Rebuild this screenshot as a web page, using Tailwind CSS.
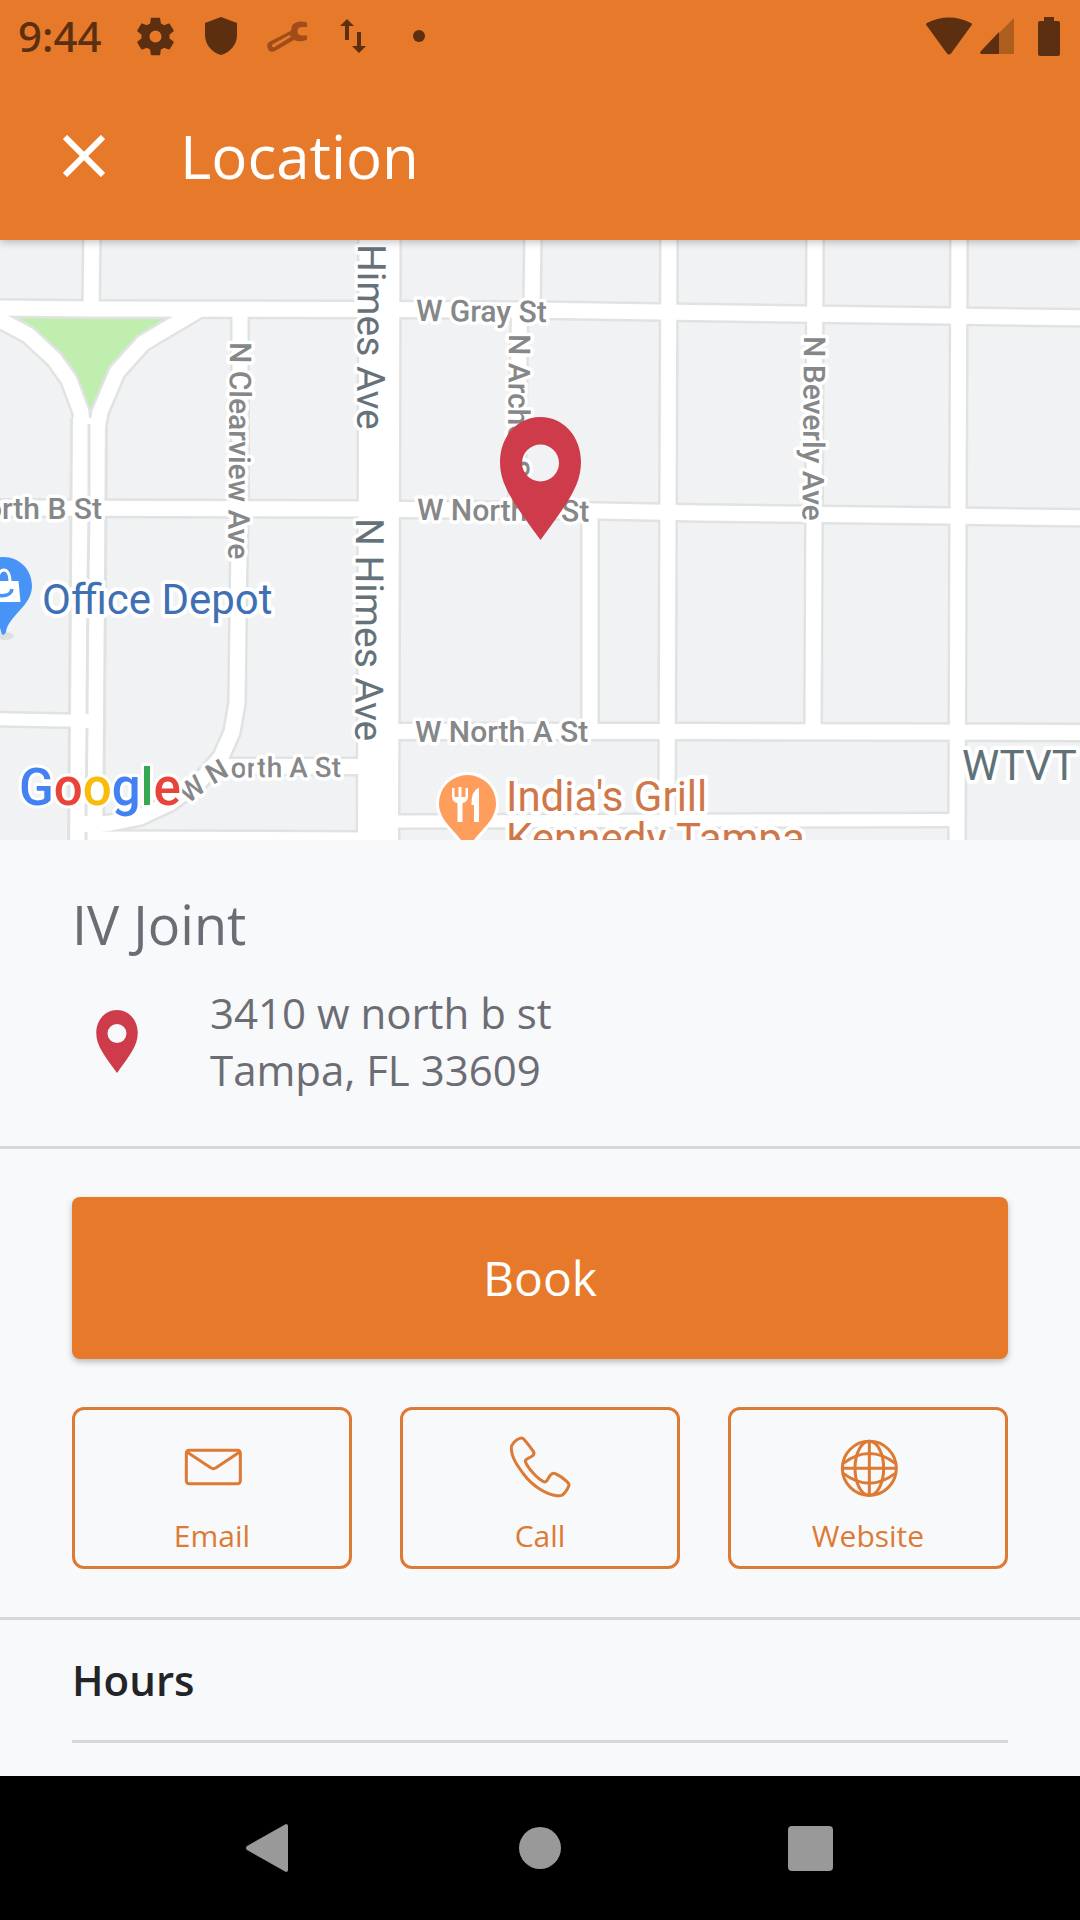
<!DOCTYPE html>
<html lang="en">
<head>
  <meta charset="UTF-8">
  <meta name="viewport" content="width=device-width, initial-scale=1.0">
  <title>Location</title>
  <script src="https://cdn.jsdelivr.net/npm/@tailwindcss/browser@4"></script>
</head>
<body class="bg-[#f8f9fb] font-['Open_Sans',sans-serif]">
  <!-- Shared pin shape -->
  <svg class="hidden" aria-hidden="true">
    <symbol id="pin" viewBox="0 0 81 123">
      <path fill="#ce3c4b" fill-rule="evenodd" d="M40.5 0C17 0 0 20 0 45C0 70 16 89 40.5 123C65 89 81 70 81 45C81 20 64 0 40.5 0ZM40.5 27.5A18.5 18.5 0 1 1 40.5 64.5A18.5 18.5 0 1 1 40.5 27.5Z"/>
    </symbol>
  </svg>

  <div class="flex min-h-screen flex-col">
    <!-- Header -->
    <header class="relative z-10 bg-[#e67a2a] shadow-[0_2px_8px_rgba(0,0,0,0.25)]">
      <div class="flex h-[72px] items-center justify-between pl-[18px] pr-5 text-[#5c2f10]">
        <div class="flex items-center">
          <span class="w-26 font-['Noto_Sans',sans-serif] text-[42px] leading-[60px] font-medium">9:44</span>
          <span class="flex w-[66px] justify-center">
            <svg class="size-[45px]" viewBox="0 0 24 24" fill="currentColor"><path d="M19.43 12.98c.04-.32.07-.64.07-.98s-.03-.66-.07-.98l2.11-1.65c.19-.15.24-.42.12-.64l-2-3.46c-.12-.22-.39-.3-.61-.22l-2.49 1c-.52-.4-1.08-.73-1.69-.98l-.38-2.65A.488.488 0 0 0 14 2h-4c-.25 0-.46.18-.49.42l-.38 2.65c-.61.25-1.17.59-1.69.98l-2.49-1c-.23-.09-.49 0-.61.22l-2 3.46c-.13.22-.07.49.12.64l2.11 1.65c-.04.32-.07.65-.07.98s.03.66.07.98l-2.11 1.65c-.19.15-.24.42-.12.64l2 3.46c.12.22.39.3.61.22l2.49-1c.52.4 1.08.73 1.69.98l.38 2.65c.03.24.24.42.49.42h4c.25 0 .46-.18.49-.42l.38-2.65c.61-.25 1.17-.59 1.69-.98l2.49 1c.23.09.49 0 .61-.22l2-3.46c.12-.22.07-.49-.12-.64l-2.11-1.65zM12 15.2a3.200 3.200 0 1 1 0-6.400a3.200 3.200 0 0 1 0 6.400z"/></svg>
          </span>
          <span class="flex w-[66px] justify-center">
            <svg class="h-[38px] w-8" viewBox="0 0 32 38" fill="currentColor"><path d="M16 0L32 6V18C32 27 26 35 16 38C6 35 0 27 0 18V6Z"/></svg>
          </span>
          <span class="flex w-[66px] justify-center">
            <svg class="h-[31px] w-10" viewBox="0 0 40 31" fill="#a04d1a"><path fill-rule="evenodd" d="M39 1C33 -.5 27 1 25 5C24 7 25 9 23.500 10L3 20.500C0 22 -.5 25 1 28C2.500 31 5 31.500 8 30L27 19C31 21 37 20.500 40 18.500V14.500H35C32 14.500 30.500 12.500 30.500 10.500C30.500 7.500 32 6 35 6H40V2ZM23 16.500L7.500 26C5 27 4 24.500 6 23L21.500 14.500C23.500 13.800 24.500 15.500 23 16.500Z"/></svg>
          </span>
          <span class="flex w-[66px] justify-center">
            <svg class="h-[34px] w-[26px]" viewBox="0 0 26 34" fill="currentColor"><path d="M7 0L14 7H9V21H5V7H0ZM19 34L12 27H17V13H21V27H26Z"/></svg>
          </span>
          <span class="flex w-[66px] justify-center">
            <span class="size-3 rounded-full bg-current"></span>
          </span>
        </div>
        <div class="flex items-center">
          <svg class="h-[38px] w-[46px]" viewBox="0 0 46 38" fill="currentColor"><path d="M1 9C-.5 8 0 6.500 1 6C14-1.500 32-1.500 45 6C46 6.500 46.500 8 45 9L25 36.500Q23 38.500 21 36.500Z"/></svg>
          <svg class="ml-2 h-9 w-[34px]" viewBox="0 0 34 36" fill="currentColor"><path d="M34 0V36H19V15Z" opacity=".4"/><path d="M19 14V36H2C0 36-.5 34 1 33Z"/></svg>
          <svg class="ml-6 h-[39px] w-[22px]" viewBox="0 0 22 39" fill="currentColor"><path d="M6 0H16V4H20Q22 4 22 6V37Q22 39 20 39H2Q0 39 0 37V6Q0 4 2 4H6Z"/></svg>
        </div>
      </div>
      <div class="flex h-[168px] items-center pl-12 text-white">
        <button type="button" aria-label="Close" class="flex size-[72px] items-center justify-center">
          <svg class="size-[42px]" viewBox="0 0 42 42" fill="none" stroke="currentColor" stroke-width="6"><path d="M2 2L40 40M40 2L2 40"/></svg>
        </button>
        <h1 class="ml-15 text-[60px] leading-[78px]">Location</h1>
      </div>
    </header>

    <main class="flex-1">
      <!-- Map -->
      <svg class="block aspect-[9/5] w-full" viewBox="0 0 1080 600" role="img" aria-label="Map around 3410 w north b st">
        <defs>
          <g id="roads" fill="none">
            <path d="M92 -10L91 69"/>
            <path d="M-10 68L90 69L360 69.500L530 70L660 72L950 76L1090 78"/>
            <path d="M-10 268L360 269L400 269.500L600 271L700 273L950 276L1090 278"/>
            <path d="M380 491.500L700 491.500L1090 492.500"/>
            <path d="M-10 75L0 80L28 95L54 119L69 140L81 172L82 190"/>
            <path d="M202 68L143 103L117 132L100 172L97 190"/>
            <path d="M240 70L240 270L238.500 340L237 463L232 492L221 517L200 541L170 563L140 577L110 583L92 585"/>
            <path d="M222 526.500L380 526.500"/>
            <path d="M88 599L370 600"/>
            <path d="M533 -10L532 70"/>
            <path d="M519.500 70L517 270"/>
            <path d="M590 270L590 491"/>
            <path d="M669 -10L668 270L667 581"/>
            <path d="M815 -10L814 270L813 491"/>
            <path d="M959 -10L958 270L957 610"/>
          </g>
          <g id="lanes" fill="none">
            <path d="M-10 479L88 481"/>
            <path d="M390 581.500L957 580"/>
          </g>
          <path id="curve" d="M176 575L191 562L213 545L226 537.500L341 537"/>
        </defs>
        <rect width="1080" height="600" fill="#f1f2f4"/>
        <path d="M18 78H165L133 101L111 129L94 169H86L74 136L57 110L35 88Z" fill="#bfeeae"/>
        <g stroke="#e1e2e2">
          <use href="#roads" stroke-width="20"/>
          <use href="#lanes" stroke-width="17"/>
          <path d="M89 178L88 340L86 610" stroke-width="38"/>
          <path d="M379.500 -10L378 610" stroke-width="45"/>
        </g>
        <g stroke="#fff">
          <path d="M89 178L88 340L86 610" stroke-width="32"/>
          <path d="M379.500 -10L378 610" stroke-width="40"/>
          <use href="#roads" stroke-width="15"/>
          <use href="#lanes" stroke-width="12"/>
        </g>
        <path d="M89 184V262M89 276L88 340L87 474M87 488L86 576M86 592V600" stroke="#e1e2e2" stroke-width="3" fill="none"/>

        <!-- Office Depot marker -->
        <ellipse cx="5" cy="396" rx="9" ry="4" fill="#000" opacity=".08"/>
        <path d="M3 317C20 317 32 330 32 346C32 366 8 376 6 392Q3 398 1 392C-1 376 -26 366 -26 346C-26 330 -14 317 3 317Z" fill="#4794f6"/>
        <path d="M-14 341H18.500L20.500 362H-16Z" fill="#fff"/>
        <path d="M-3 342C-3 328 10 324 10 342" stroke="#fff" stroke-width="3" fill="none"/>
        <path d="M-8 349C-6 358 11 358 12 349" stroke="#4794f6" stroke-width="3.500" fill="none"/>

        <!-- Restaurant marker -->
        <path d="M467.500 535A28.500 28.500 0 0 1 496 563.500C496 579 483 588 474 600L467 606L461 600C452 588 439 579 439 563.500A28.500 28.500 0 0 1 467.500 535Z" fill="#ff9d5c" stroke="#fff" stroke-width="6" paint-order="stroke"/>
        <path d="M452 548V556Q452 562 457.500 563V582H462.500V563Q468 562 468 556V548H465.500V557H461.500V547H458.500V557H454.500V548ZM479 547.500Q471 551 471.500 565H474V582H479Z" fill="#fff"/>

        <!-- Street names -->
        <g class="font-['Roboto',sans-serif]" stroke="#fff" stroke-linejoin="round" paint-order="stroke">
          <g class="text-[30px] font-medium" fill="#858789" stroke-width="7">
            <text x="416" y="81" transform="rotate(0.500 416 81)">W Gray St</text>
            <text x="417" y="280" transform="rotate(0.500 417 280)">W North B St</text>
            <text x="415" y="502">W North A St</text>
            <text x="102" y="279" text-anchor="end">W North B St</text>
            <text class="text-[28px]"><textPath href="#curve" startOffset="100%" text-anchor="end">W North A St</textPath></text>
            <text transform="translate(230 102) rotate(90.500)">N Clearview Ave</text>
            <text transform="translate(804 96) rotate(90.500)">N Beverly Ave</text>
            <text transform="translate(509 94) rotate(90.500)">N Archer St</text>
          </g>
          <g class="text-[39px]" fill="#66727a" stroke-width="7">
            <text transform="translate(358 4) rotate(90.300)">Himes Ave</text>
            <text transform="translate(356 278) rotate(90.200)">N Himes Ave</text>
          </g>
          <g class="text-[42px]" stroke-width="8">
            <text x="42" y="374" fill="#4070b4">Office Depot</text>
            <text x="962" y="540" fill="#5f727a">WTVT</text>
            <text x="506" y="571" fill="#cf7749">India's Grill</text>
            <text x="506" y="613" fill="#cf7749">Kennedy Tampa</text>
          </g>
          <text x="19" y="565" class="text-[51px] font-medium" stroke-width="6"><tspan fill="#4482f4">G</tspan><tspan fill="#e8443a">o</tspan><tspan fill="#fabc0a">o</tspan><tspan fill="#4482f4">g</tspan><tspan fill="#36a852">l</tspan><tspan fill="#e8443a">e</tspan></text>
        </g>
        <use href="#pin" x="500" y="177" width="81" height="123"/>
      </svg>

      <!-- Address -->
      <section class="border-b-3 border-[#d6d7d9] px-[72px] py-12 text-[#6c6d74]">
        <h2 class="text-[54px] leading-[72px]">IV Joint</h2>
        <div class="mt-6 flex items-center">
          <svg class="ml-6 h-[63px] w-[42px]" aria-hidden="true"><use href="#pin"/></svg>
          <address class="ml-[72px] text-[42px] leading-[57px] not-italic">3410 w north b st<br>Tampa, FL 33609</address>
        </div>
      </section>

      <!-- Actions -->
      <section class="border-b-3 border-[#d6d7d9] px-[72px] py-12">
        <button type="button" class="block h-[162px] w-full rounded-lg bg-[#e67a2a] text-[48px] leading-[66px] text-white shadow-[0_3px_6px_rgba(0,0,0,0.25)]">Book</button>
        <div class="mt-12 grid grid-cols-3 gap-12 text-[30px] leading-[42px] text-[#dd7a33]">
          <a href="#email" class="flex h-[162px] flex-col items-center rounded-xl border-3 border-current pt-6">
            <svg class="size-[66px]" viewBox="0 0 198 198" fill="none" stroke="currentColor" stroke-width="9" stroke-linejoin="round"><rect x="22" y="49" width="162" height="100" rx="8"/><path d="M24 54L95 101Q103 107 111 101L182 54"/></svg>
            <span class="mt-[15px]">Email</span>
          </a>
          <a href="#call" class="flex h-[162px] flex-col items-center rounded-xl border-3 border-current pt-6">
            <svg class="size-[66px]" viewBox="0 0 198 198" fill="none" stroke="currentColor" stroke-width="9" stroke-linejoin="round"><path d="M13 42C13 30 28 16 38 13Q46 10 50 15Q66 33 79 52Q84 60 76 66L60 75Q53 79 56 85C64 104 92 134 108 142Q114 146 119 141L129 125Q135 116 143 118Q165 127 182 145Q188 151 185 157C181 166 174 177 166 183Q161 186 150 185C118 182 76 155 52 123C30 94 13 70 13 42Z"/></svg>
            <span class="mt-[15px]">Call</span>
          </a>
          <a href="#website" class="flex h-[162px] flex-col items-center rounded-xl border-3 border-current pt-6">
            <svg class="size-[66px]" viewBox="0 0 198 198" fill="none" stroke="currentColor" stroke-width="9"><circle cx="103" cy="103" r="81"/><ellipse cx="103" cy="103" rx="43" ry="81"/><path d="M103 22V184M22 103H184M25 88Q103 29 181 88M25 118Q103 177 181 118"/></svg>
            <span class="mt-[15px]">Website</span>
          </a>
        </div>
      </section>

      <!-- Hours -->
      <section class="px-[72px]">
        <h3 class="border-b-3 border-[#d6d7d9] py-[30px] text-[42px] leading-[60px] font-semibold text-[#232428]">Hours</h3>
      </section>
    </main>

    <!-- System navigation -->
    <nav class="grid h-36 grid-cols-3 bg-black px-[12.5%] text-[#999]">
      <button type="button" aria-label="Back" class="flex items-center justify-center">
        <svg class="h-12 w-12" viewBox="0 0 48 48" fill="currentColor"><path d="M40 0Q42 0 42 2V46Q42 48 40 48L1 26Q-1 24 1 22Z"/></svg>
      </button>
      <button type="button" aria-label="Home" class="flex items-center justify-center">
        <span class="size-[42px] rounded-full bg-current"></span>
      </button>
      <button type="button" aria-label="Recent apps" class="flex items-center justify-center">
        <span class="size-[45px] rounded-sm bg-current"></span>
      </button>
    </nav>
  </div>
</body>
</html>
